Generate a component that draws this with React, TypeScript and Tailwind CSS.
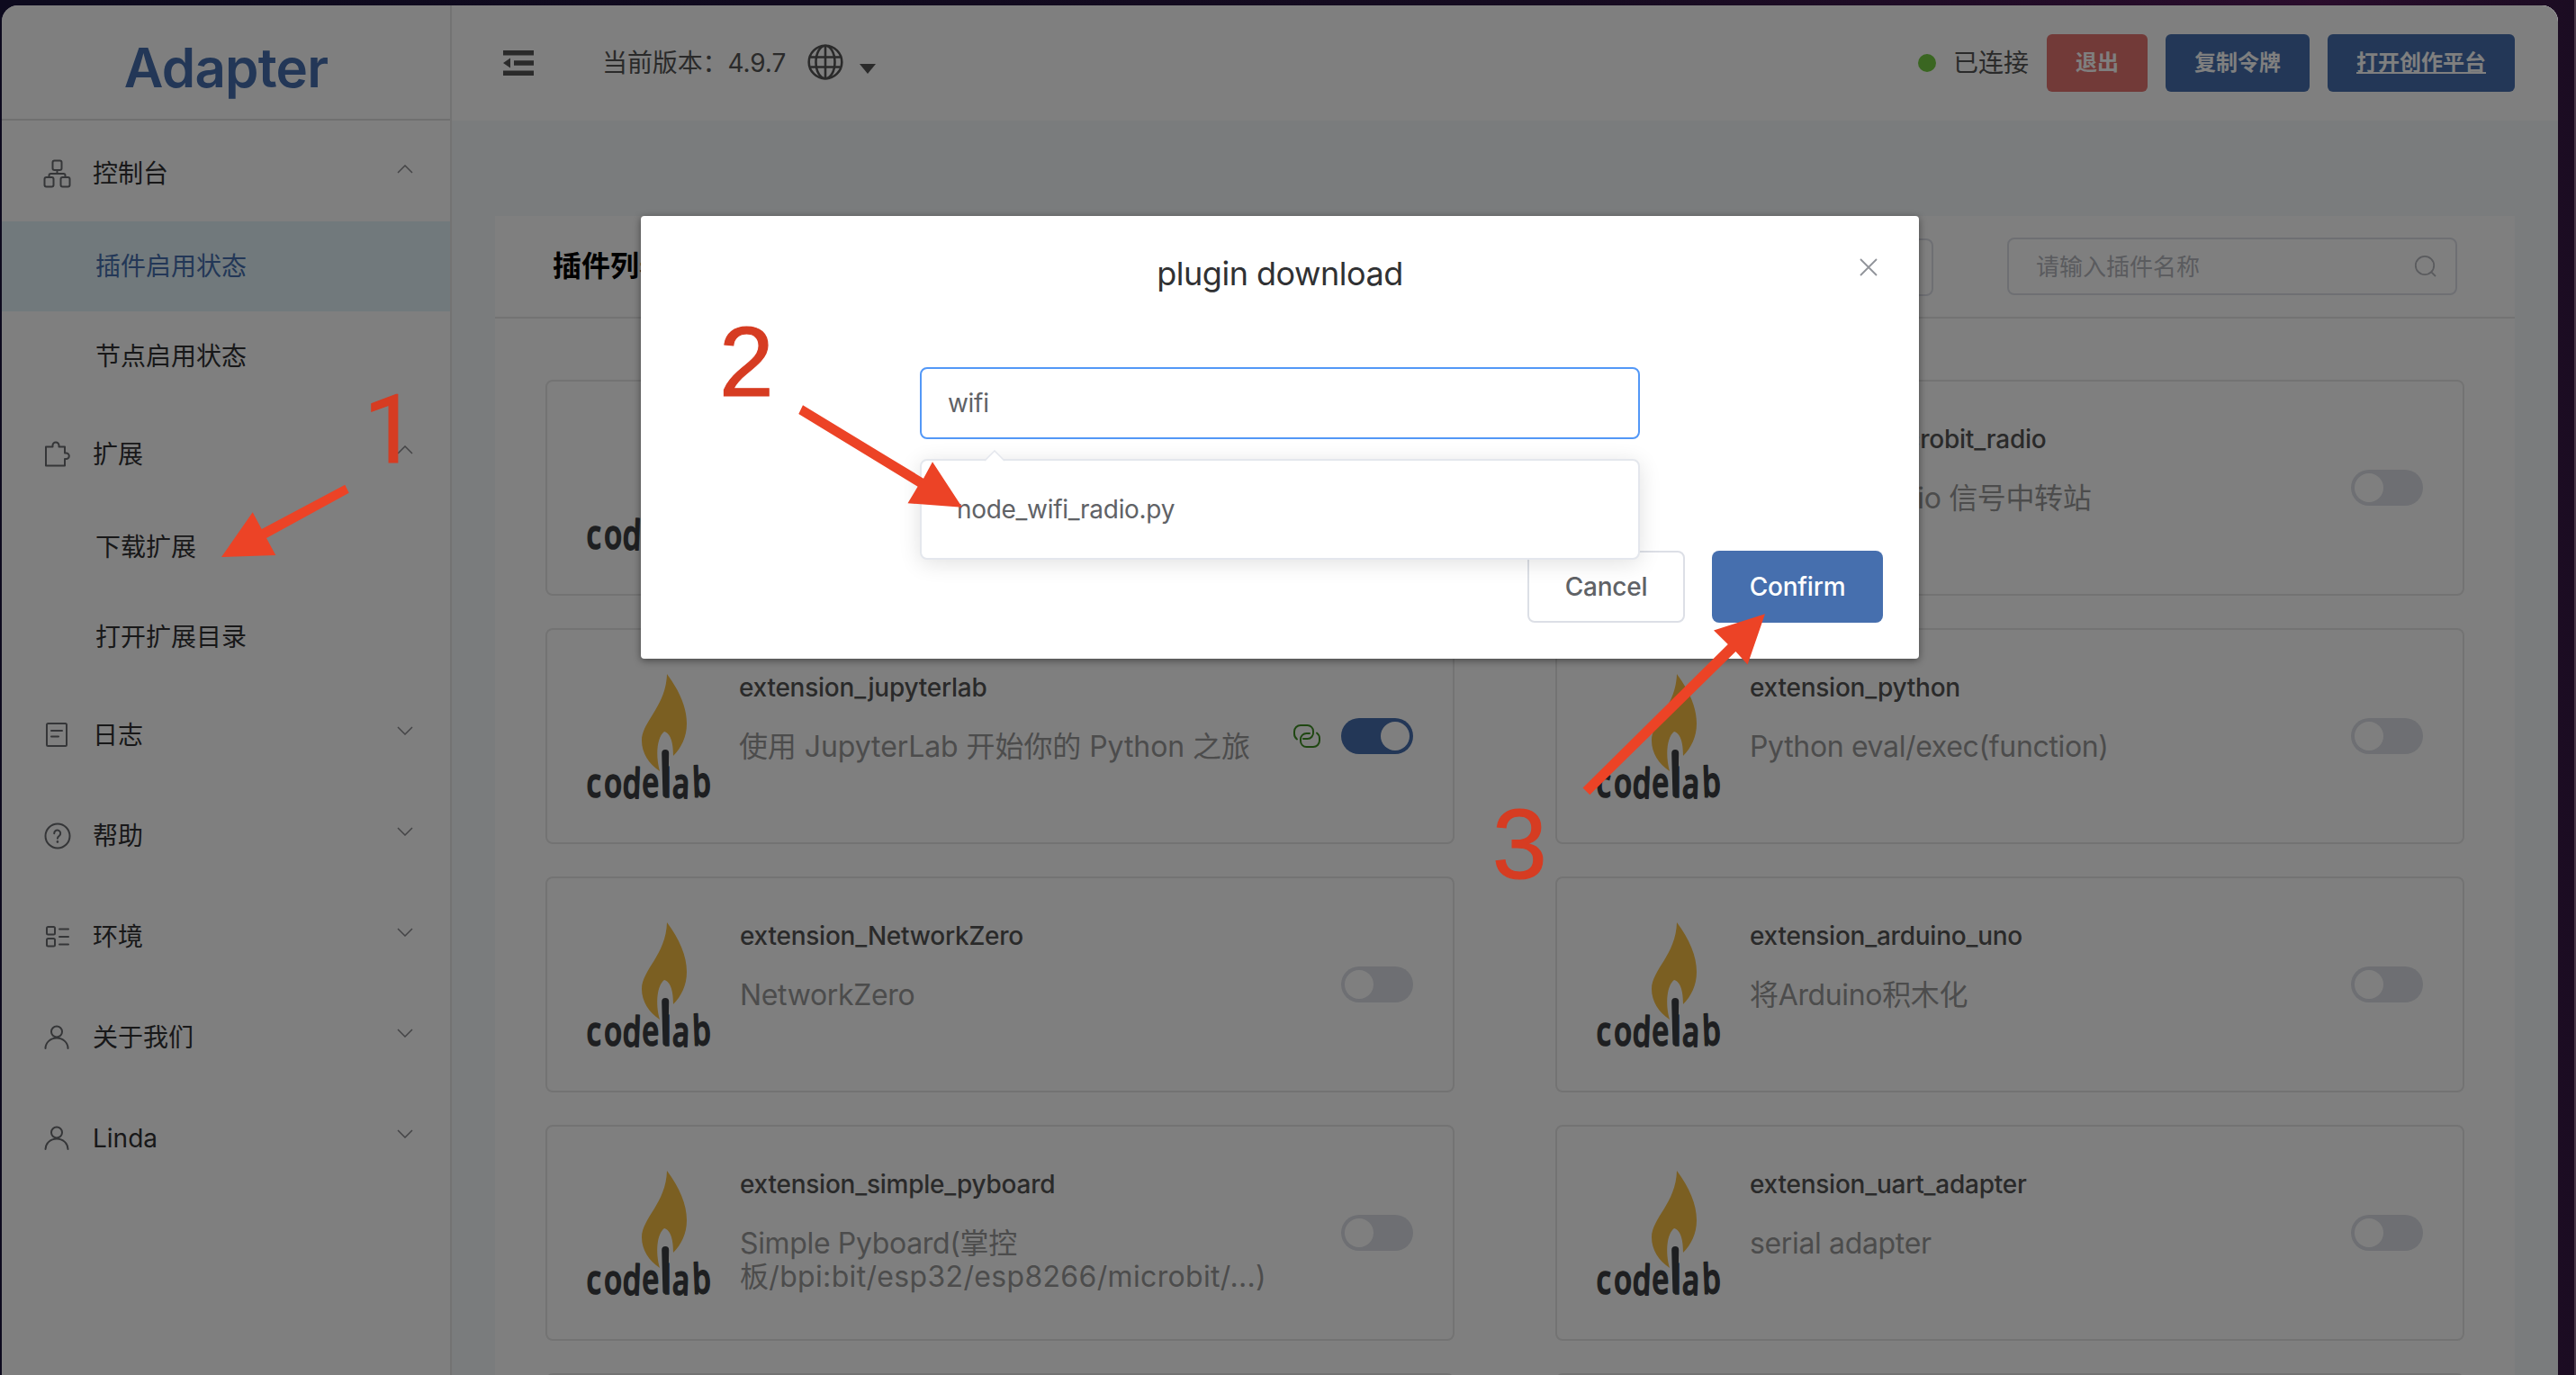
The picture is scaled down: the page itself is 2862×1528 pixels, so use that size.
import React from "react";

const base = {
  fill: "none",
  stroke: "currentColor",
  strokeWidth: 2,
  strokeLinecap: "round" as const,
  strokeLinejoin: "round" as const,
};

function OrgIcon() {
  return (
    <svg width="34" height="34" viewBox="0 0 34 34" {...base}>
      <rect x="11.5" y="2.500" width="10" height="10.500" rx="2" />
      <rect x="2.5" y="21" width="10" height="10.500" rx="2" />
      <rect x="20.5" y="21" width="10" height="10.500" rx="2" />
      <path d="M16.500 13v4M7.500 21v-2a2 2 0 0 1 2-2h14a2 2 0 0 1 2 2v2" />
    </svg>
  );
}
function PuzzleIcon() {
  return (
    <svg width="34" height="34" viewBox="0 0 34 34" {...base}>
      <path d="M4 8.500h7.500V7a3.500 3.500 0 0 1 7 0v1.500H25v7h1.500a3.300 3.300 0 0 1 0 6.600H25V29.500H4z" />
    </svg>
  );
}
function NoteIcon() {
  return (
    <svg width="34" height="34" viewBox="0 0 34 34" {...base}>
      <rect x="5" y="4" width="22" height="25" rx="1.500" />
      <path d="M10 12h12M10 18.500h8" />
    </svg>
  );
}
function HelpIcon() {
  return (
    <svg width="34" height="34" viewBox="0 0 34 34" {...base}>
      <circle cx="17" cy="17" r="13.500" />
      <path d="M13.200 14.200a3.500 3.500 0 1 1 5.600 2.600c-1.200.8-1.900 1.400-1.900 3" />
      <path d="M16.900 23.400v.2" strokeWidth="2.600" />
    </svg>
  );
}
function ListIcon() {
  return (
    <svg width="34" height="34" viewBox="0 0 34 34" {...base}>
      <rect x="5" y="6" width="9" height="8.500" rx="1.500" />
      <rect x="5" y="19" width="9" height="8.500" rx="1.500" />
      <path d="M19 8.500h10M19 17h10M19 25.500h10" />
    </svg>
  );
}
function UserIcon() {
  return (
    <svg width="34" height="34" viewBox="0 0 34 34" {...base}>
      <circle cx="16" cy="10.500" r="6" />
      <path d="M3.500 29a12.500 11.500 0 0 1 25 0" />
    </svg>
  );
}
function Chevron({ up }: { up?: boolean }) {
  return (
    <svg width="18" height="10" viewBox="0 0 18 10" fill="none" stroke="#88898d" strokeWidth="1.500">
      {up ? <path d="M1 9l8-8 8 8" /> : <path d="M1 1l8 8 8-8" />}
    </svg>
  );
}

function MenuGroup({ icon, label, open, children }: { icon: React.ReactNode; label: string; open?: boolean; children?: React.ReactNode }) {
  return (
    <div>
      <div className="flex h-[112px] items-center pr-[41px] pl-[45px] text-[28px] text-[#303133]">
        <span className="mt-[5px] w-[56px] text-[#6a6c70]">{icon}</span>
        <span className="mt-[6px] flex-1 leading-[40px]">{label}</span>
        <span className="-mt-[4px]">
          <Chevron up={open} />
        </span>
      </div>
      {children}
    </div>
  );
}
function MenuItem({ label, active }: { label: string; active?: boolean }) {
  return (
    <div className={"flex h-[100px] items-center pl-[104px] text-[28px] " + (active ? "bg-[#e2f3f8] text-[#466fae]" : "text-[#303133]")}>
      {label}
    </div>
  );
}

function CodelabLogo() {
  return (
    <svg width="150" height="150" viewBox="0 0 150 150">
      <path
        d="M90 0C104 19 112 37 112 55C112 70 106 82 97 91C97 79 95 66 87 64C79 70 77 90 82 108C70 100 62 88 62 74C62 53 89 36 90 0Z"
        fill="#f6be44"
      />
      <g transform="translate(2 137) scale(0.72 1)">
        <text
          x="-2 25 53 84 116 130 162"
          y="0"
          rotate="0 0 3 -2 0 3 -3"
          fill="#3c3f42"
          stroke="#3c3f42"
          strokeWidth="1.600"
          strokeLinejoin="round"
          fontSize="46"
          fontWeight="600"
          fontFamily="'Open Sans', sans-serif"
        >
          codelab
        </text>
      </g>
      <path d="M84.200 88a4 4 0 0 1 8 0l-.8 46a3 3 0 0 1-6 0z" fill="#3c3f42" />
    </svg>
  );
}

function LinkIcon() {
  return (
    <svg width="30" height="26" viewBox="0 0 30 26" fill="none" stroke="#3f8f24" strokeWidth="2" strokeLinecap="round">
      <path d="M4 16.500C2 15 1 13.500 1 10.500V8a7 7 0 0 1 7-7h7.500A6.500 6.500 0 0 1 22 7.500v1A6.500 6.500 0 0 1 15.500 16H11" />
      <path d="M26 9.500c2 1.500 3 3 3 6V18a7 7 0 0 1-7 7h-7.500A6.500 6.500 0 0 1 8 18.500v-2A6.500 6.500 0 0 1 14.500 10H18" />
    </svg>
  );
}

function Switch({ on }: { on?: boolean }) {
  return (
    <span className={"flex h-[40px] w-[80px] items-center rounded-full px-[4px] " + (on ? "justify-end bg-[#466fae]" : "bg-[#dcdfe6]")}>
      <span className="h-[32px] w-[32px] rounded-full bg-white" />
    </span>
  );
}

const cardBox = "flex h-[240px] w-[1010px] rounded-[8px] border-2 border-[#e6e6e6]";

function Card({ title, desc, on }: { title: string; desc: React.ReactNode; on?: boolean }) {
  return (
    <div className={cardBox}>
      <div className="mt-[49px] ml-[43px] w-[171px]">
        <CodelabLogo />
      </div>
      <div className="mt-[44px] w-[620px]">
        <div className="text-[28px] leading-[40px] font-medium tracking-[-0.24px] text-[#555]">{title}</div>
        <div className="mt-[27px] text-[32px] leading-[37px] tracking-[-0.35px] whitespace-nowrap text-[#999]">{desc}</div>
      </div>
      <div className="mt-[98px] mr-[44px] ml-auto flex h-[40px] items-center gap-[23px]">
        {on && <LinkIcon />}
        <Switch on={on} />
      </div>
    </div>
  );
}

const cards: { title: string; desc: React.ReactNode; on?: boolean }[] = [
  { title: "extension_eim", desc: "EIM" },
  { title: "extension_microbit_radio", desc: "Microbit Radio 信号中转站" },
  {
    title: "extension_jupyterlab",
    desc: <span className="tracking-[-0.07px]">使用 JupyterLab 开始你的 Python 之旅</span>,
    on: true,
  },
  { title: "extension_python", desc: "Python eval/exec(function)" },
  { title: "extension_NetworkZero", desc: "NetworkZero" },
  { title: "extension_arduino_uno", desc: "将Arduino积木化" },
  {
    title: "extension_simple_pyboard",
    desc: (
      <>
        Simple Pyboard(掌控
        <br />
        <span className="tracking-[0.33px]">板/bpi:bit/esp32/esp8266/microbit/...)</span>
      </>
    ),
  },
  { title: "extension_uart_adapter", desc: "serial adapter" },
];

function Header() {
  return (
    <header className="flex h-[128px] items-center bg-white pr-[48px] pl-[57px] text-[28px] text-[#555]">
      <svg width="34" height="28" viewBox="0 0 34 28" fill="#555">
        <path d="M0 0h34v5.500H0zM12 11.200h22v5.500H12zM0 22.500h34V28H0zM0 14l8-5.500v11z" />
      </svg>
      <span className="ml-[76px] tracking-[-0.1px]">当前版本：4.9.7</span>
      <svg className="-mt-[2px] ml-[24px]" width="40" height="40" viewBox="0 0 40 40" fill="none" stroke="#555" strokeWidth="2.600">
        <circle cx="20" cy="20" r="18.300" />
        <ellipse cx="20" cy="20" rx="10.500" ry="18.300" />
        <path d="M20 2v36M3.500 14.500h33M3.500 25.500h33" />
      </svg>
      <svg className="mt-[12px] ml-[18px]" width="18" height="11" viewBox="0 0 18 11" fill="#555">
        <path d="M0 0h18l-9 11z" />
      </svg>
      <span className="ml-auto h-[20px] w-[20px] rounded-full bg-[#74cc42]" />
      <span className="ml-[19px]">已连接</span>
      <div className="ml-[20px] flex gap-[20px] text-[24px] font-semibold text-white">
        <button className="h-[64px] w-[112px] rounded-[6px] bg-[#e57470]">退出</button>
        <button className="h-[64px] w-[160px] rounded-[6px] bg-[#466fae]">复制令牌</button>
        <button className="h-[64px] w-[208px] rounded-[6px] bg-[#466fae] underline">打开创作平台</button>
      </div>
    </header>
  );
}

function Dialog() {
  return (
    <div className="absolute top-[240px] left-[712px] flex h-[492px] w-[1420px] flex-col rounded-[4px] bg-white shadow-[0_2px_8px_rgba(0,0,0,0.45)]">
      <svg className="absolute top-[47px] right-[46px]" width="20" height="20" viewBox="0 0 20 20" stroke="#909399" strokeWidth="1.800">
        <path d="M1 1l18 18M19 1L1 19" />
      </svg>
      <h2 className="mt-[40px] text-center text-[36px] leading-[48px] tracking-[-0.5px] text-[#303133]">plugin download</h2>
      <div className="relative mt-[80px] flex h-[80px] w-[800px] items-center self-center rounded-[8px] border-2 border-[#5398f7] pl-[29px] text-[28px] tracking-[-0.3px] text-[#606266]">
        wifi
        <div className="absolute top-[100px] -left-[2px] z-10 flex h-[112px] w-[800px] items-center rounded-[8px] border-2 border-[#e4e7ed] bg-white pl-[39px] shadow-[0_4px_24px_rgba(0,0,0,0.12)]">
          <svg className="absolute -top-[12px] left-[69px]" width="24" height="14" viewBox="0 0 24 14">
            <path d="M0 14L12 1l12 13z" fill="#fff" />
            <path d="M1 12L12 1l11 11" fill="none" stroke="#e4e7ed" strokeWidth="1.500" />
          </svg>
          <span>node_wifi_radio.py</span>
        </div>
      </div>
      <div className="mt-[124px] mr-[40px] flex justify-end gap-[30px] text-[28px] font-medium tracking-[-0.2px]">
        <button className="h-[80px] w-[175px] rounded-[8px] border-2 border-[#dcdfe6] text-[#606266]">Cancel</button>
        <button className="h-[80px] w-[190px] rounded-[8px] bg-[#466fae] text-white">Confirm</button>
      </div>
    </div>
  );
}

function Annotations() {
  return (
    <svg className="absolute top-0 left-0 z-20" width="2862" height="1528" viewBox="0 0 2862 1528">
      <g fill="#ec4326">
        <path d="M246 619L280.700 569.300L290.700 588L383.300 538.700L387.700 547.700L296 598L306.300 617Z" />
        <path d="M1069 563.700L1008.500 559.300L1019.600 540.700L887.300 460L892 450.300L1026 531.700L1036 513.300Z" />
        <path d="M1961 682.300L1941.600 738.500L1928.400 724L1766.300 883.200L1758.500 875.500L1919.800 716L1904 700.600Z" />
      </g>
      <g fill="#d63c22" stroke="#d63c22" strokeWidth="1.200" fontFamily="'Liberation Sans', Arial, sans-serif" fontSize="109">
        <text x="404" y="514" fontFamily="Roboto, sans-serif" fontSize="106">1</text>
        <text x="799" y="440">2</text>
        <text x="1658" y="976">3</text>
      </g>
    </svg>
  );
}

export default function App() {
  return (
    <div className="relative h-[1528px] w-[2862px] overflow-hidden border-r-2 border-[#4a3a4a] bg-[linear-gradient(90deg,#0d0a1e_0%,#150b20_60%,#2a0d2c_90%,#1b0c22_100%)] pt-[6px] pl-[2px] font-['Inter','Noto_Sans_CJK_SC',sans-serif]">
      <div className="relative flex h-[1522px] w-[2840px] overflow-hidden rounded-t-[18px] bg-white">
        <aside className="w-[500px] shrink-0 border-r-2 border-[#e6e6e6]">
          <div className="flex h-[128px] items-center justify-center border-b-2 border-[#e0e0e0] pt-[12px] text-[60px] font-semibold tracking-[-0.8px] text-[#466fae]">
            Adapter
          </div>
          <MenuGroup icon={<OrgIcon />} label="控制台" open>
            <MenuItem label="插件启用状态" active />
            <MenuItem label="节点启用状态" />
          </MenuGroup>
          <MenuGroup icon={<PuzzleIcon />} label="扩展" open>
            <MenuItem label="下载扩展" />
            <MenuItem label="打开扩展目录" />
          </MenuGroup>
          <MenuGroup icon={<NoteIcon />} label="日志" />
          <MenuGroup icon={<HelpIcon />} label="帮助" />
          <MenuGroup icon={<ListIcon />} label="环境" />
          <MenuGroup icon={<UserIcon />} label="关于我们" />
          <MenuGroup icon={<UserIcon />} label="Linda" />
        </aside>
        <div className="flex-1">
          <Header />
          <main className="h-[1394px] bg-[#f5f8fb] pt-[106px] pr-[48px] pl-[48px]">
            <section className="bg-white">
              <div className="flex h-[114px] items-center border-b-2 border-[#e6e6e6] pr-[64px] pl-[64px]">
                <h1 className="text-[32px] font-bold text-black">插件列表</h1>
                <div className="mt-[2px] ml-auto h-[64px] w-[400px] rounded-[8px] border-2 border-[#dcdfe6]" />
                <div className="ml-[82px] flex h-[64px] w-[500px] items-center justify-between rounded-[8px] border-2 border-[#dcdfe6] pr-[20px] pl-[30px] text-[26px] text-[#b4b6bc]">
                  请输入插件名称
                  <svg width="26" height="26" viewBox="0 0 26 26" fill="none" stroke="#b4b6bc" strokeWidth="1.800">
                    <circle cx="12" cy="12" r="10.200" />
                    <path d="M19.300 19.300L24 24" />
                  </svg>
                </div>
              </div>
              <div className="grid grid-cols-[1010px_1010px] gap-x-[112px] gap-y-[36px] px-[56px] pt-[68px]">
                {cards.map((card) => (
                  <Card key={card.title} {...card} />
                ))}
                <div className={cardBox} />
                <div className={cardBox} />
              </div>
            </section>
          </main>
        </div>
        <div className="absolute inset-0 bg-black/50" />
      </div>
      <Dialog />
      <Annotations />
    </div>
  );
}
